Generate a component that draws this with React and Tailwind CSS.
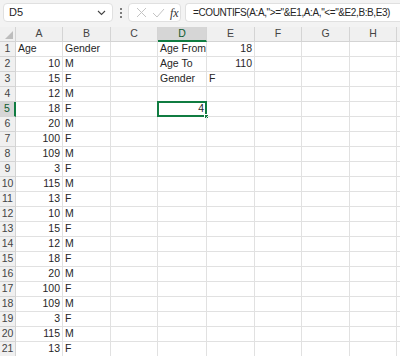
import React from "react";

const cols = ["A", "B", "C", "D", "E", "F", "G", "H"];

const ageData = [
  [10, "M"], [15, "F"], [12, "M"], [18, "F"], [20, "M"], [100, "F"], [109, "M"], [3, "F"], [115, "M"], [13, "F"],
  [10, "M"], [15, "F"], [12, "M"], [18, "F"], [20, "M"], [100, "F"], [109, "M"], [3, "F"], [115, "M"], [13, "F"],
];

const extra = {
  1: { D: "Age From", E: 18 },
  2: { D: "Age To", E: 110 },
  3: { D: "Gender", E: "F" },
  5: { D: 4 },
};

const cellValue = (r, c) => {
  if (r === 1 && c === "A") return "Age";
  if (r === 1 && c === "B") return "Gender";
  if (r > 1 && c === "A") return ageData[r - 2][0];
  if (r > 1 && c === "B") return ageData[r - 2][1];
  return extra[r]?.[c] ?? "";
};

const Toolbar = () => (
  <div className="flex h-[27px] items-start bg-[#f3f3f3] pt-[3px] pl-[3px]">
    <div className="flex h-[19px] w-[110px] shrink-0 items-center justify-between rounded-[4px] border border-[#e0e0e0] bg-white pl-[5px] pr-[6px] text-[11px] text-[#262626]">
      <span>D5</span>
      <svg width="9" height="6" viewBox="0 0 9 6" fill="none">
        <path d="M1 1l3.5 3.5L8 1" stroke="#444" strokeWidth="1.1" />
      </svg>
    </div>
    <div className="flex h-[19px] w-[15px] shrink-0 flex-col items-center justify-center gap-[2px]">
      <span className="h-[2px] w-[2px] rounded-full bg-[#555]" />
      <span className="h-[2px] w-[2px] rounded-full bg-[#555]" />
      <span className="h-[2px] w-[2px] rounded-full bg-[#555]" />
    </div>
    <div className="flex h-[19px] w-[53px] shrink-0 items-center gap-[5px] rounded-[4px] border border-[#e0e0e0] bg-white pl-[7px]">
      <svg width="11" height="11" viewBox="0 0 11 11" fill="none">
        <path d="M1 1l9 9M10 1l-9 9" stroke="#c4c4c4" strokeWidth="1" />
      </svg>
      <svg width="13" height="10" viewBox="0 0 13 10" fill="none">
        <path d="M1 5l4 4 7-8" stroke="#c4c4c4" strokeWidth="1" />
      </svg>
      <span className="font-['Liberation_Serif',serif] text-[12px] italic leading-none text-[#333]">fx</span>
    </div>
    <div className="ml-[4px] flex h-[19px] min-w-0 flex-1 items-center overflow-hidden rounded-l-[4px] border border-r-0 border-[#e0e0e0] bg-white pl-[7px] text-[10px] tracking-[-0.4px] whitespace-nowrap text-[#262626]">
      =COUNTIFS(A:A,"&gt;="&amp;E1,A:A,"&lt;="&amp;E2,B:B,E3)
    </div>
  </div>
);

export default function App() {
  const rows = Array.from({ length: 21 }, (_, i) => i + 1);
  return (
    <div className="h-[356px] w-[400px] overflow-hidden bg-white font-['Liberation_Sans',Arial,sans-serif]">
      <Toolbar />
      <div className="grid grid-cols-[16px_47px_48px_47px_49px_48px_47px_48px_47px_1fr] auto-rows-[15px] text-[10.5px] text-[#262626]">
        <div className="relative border-r border-b border-[#d4d4d4] bg-[#f0f0f0]">
          <svg className="absolute right-[2px] bottom-[2px]" width="8" height="8" viewBox="0 0 8 8">
            <path d="M8 0V8H0Z" fill="#bdbdbd" />
          </svg>
        </div>
        {cols.map((c) =>
          c === "D" ? (
            <div key={c} className="flex items-center justify-center border-r border-b-2 border-r-[#d4d4d4] border-b-[#107c41] bg-[#d6d6d6] pt-[1px] text-[#0e5c2f]">
              {c}
            </div>
          ) : (
            <div key={c} className="flex items-center justify-center border-r border-b border-[#d4d4d4] bg-[#f0f0f0] text-[#444]">
              {c}
            </div>
          )
        )}
        <div className="border-b border-[#d4d4d4] bg-[#f0f0f0]" />
        {rows.map((r) => (
          <React.Fragment key={r}>
            {r === 5 ? (
              <div className="flex items-center justify-center border-r-2 border-b border-r-[#107c41] border-b-[#d4d4d4] bg-[#d6d6d6] text-[#0e5c2f]">
                {r}
              </div>
            ) : (
              <div className="flex items-center justify-center border-r border-b border-[#d4d4d4] bg-[#f0f0f0] text-[#444]">
                {r}
              </div>
            )}
            {cols.map((c) => {
              const v = cellValue(r, c);
              const isNum = typeof v === "number";
              const active = r === 5 && c === "D";
              return (
                <div
                  key={c}
                  className={`relative flex items-center overflow-visible whitespace-nowrap border-r border-b border-[#e1e1e1] px-[2px] ${
                    isNum ? "justify-end" : "justify-start"
                  }`}
                >
                  {v}
                  {active && (
                    <>
                      <div className="absolute -top-[1px] -left-[1px] -right-[1px] -bottom-[1px] border-2 border-[#107c41]" />
                      <div className="absolute -right-[3px] -bottom-[3px] h-[5px] w-[5px] border border-white bg-[#107c41]" />
                    </>
                  )}
                </div>
              );
            })}
            <div className="border-b border-[#e1e1e1]" />
          </React.Fragment>
        ))}
      </div>
    </div>
  );
}
